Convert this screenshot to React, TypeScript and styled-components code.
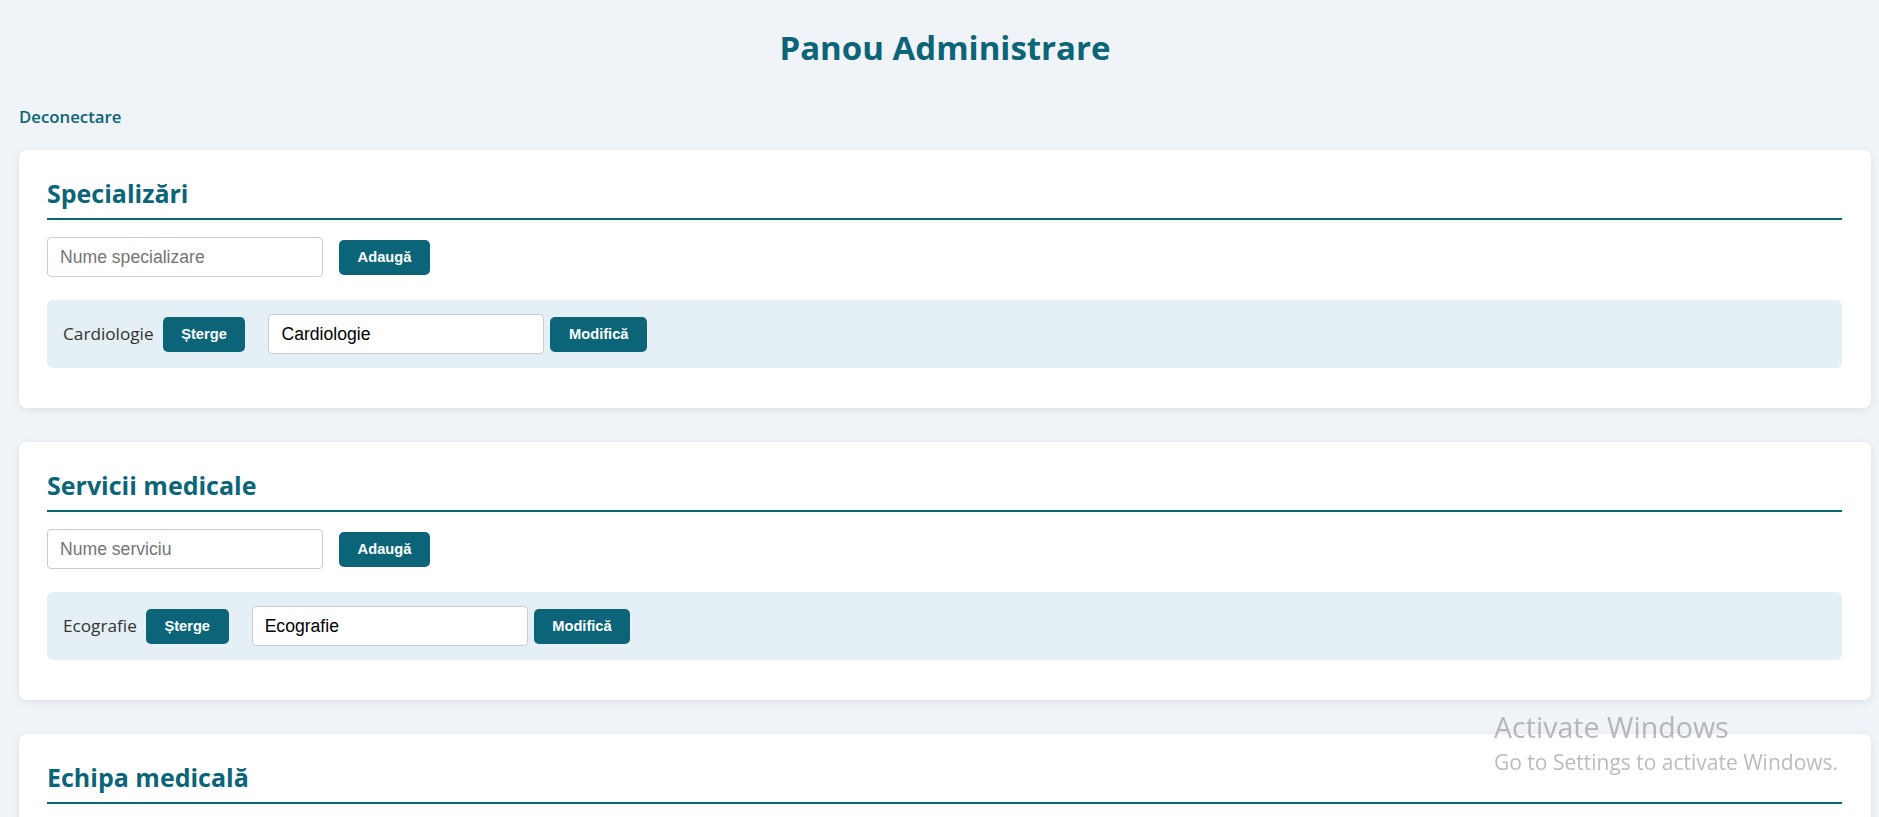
import React, { useState } from "react";
import styled, { createGlobalStyle } from "styled-components";

const TEAL = "#0b6477";

type Item = { id: number; name: string };

const GlobalStyle = createGlobalStyle`
  html, body {
    margin: 0;
    padding: 0;
    background-color: #f0f4f8;
    font-family: "Open Sans", "Noto Sans", "DejaVu Sans", sans-serif;
  }
  * {
    box-sizing: border-box;
  }
`;

const Page = styled.div`
  padding: 0 8px 40px 19px;
`;

const Title = styled.h1`
  margin: 0;
  padding-top: 28px;
  text-align: center;
  font-size: 33px;
  line-height: 40px;
  font-weight: 700;
  color: ${TEAL};
`;

const Nav = styled.div`
  display: flex;
  margin-top: 39px;
`;

const Logout = styled.a`
  font-size: 16.8px;
  line-height: 20px;
  font-weight: 600;
  color: ${TEAL};
  text-decoration: none;
  cursor: pointer;
`;

const Sections = styled.div`
  display: flex;
  flex-direction: column;
  gap: 34px;
  margin-top: 23px;
`;

const Card = styled.section`
  background-color: #ffffff;
  border-radius: 8px;
  padding: 27px 29px 40px 28px;
  box-shadow: 0 2px 8px rgba(0, 0, 0, 0.08);
`;

const SectionTitle = styled.h2`
  margin: 0 0 17px;
  padding-bottom: 9px;
  border-bottom: 2px solid ${TEAL};
  font-size: 25px;
  line-height: 32px;
  font-weight: 700;
  color: ${TEAL};
`;

const AddRow = styled.div`
  display: flex;
  align-items: center;
  gap: 16px;
  margin-bottom: 23px;
`;

const TextInput = styled.input`
  width: 276px;
  height: 40px;
  padding: 0 12px;
  border: 1px solid #cccccc;
  border-radius: 4px;
  background: #ffffff;
  font-family: "Liberation Sans", Arial, sans-serif;
  font-size: 17.6px;
  color: #000000;
  outline: none;
  &::placeholder {
    color: #757575;
  }
`;

const Button = styled.button`
  padding: 9px 18.6px;
  border: none;
  border-radius: 5px;
  background-color: ${TEAL};
  color: #ffffff;
  font-family: "Liberation Sans", Arial, sans-serif;
  font-size: 14.67px;
  line-height: 17px;
  font-weight: 700;
  cursor: pointer;
`;

const ItemRow = styled.div`
  display: flex;
  align-items: center;
  padding: 14px 16px;
  border-radius: 6px;
  background-color: #e5f0f6;
`;

const ItemName = styled.span`
  margin-right: 9px;
  font-size: 17.2px;
  line-height: 20px;
  color: #333333;
`;

const EditForm = styled.div`
  display: flex;
  align-items: center;
  gap: 6px;
  margin-left: 23px;
`;

const Watermark = styled.div`
  position: fixed;
  left: 1494px;
  top: 709px;
  color: rgba(120, 120, 120, 0.5);
  pointer-events: none;
`;

const WatermarkTitle = styled.div`
  font-size: 28.6px;
  line-height: 36px;
`;

const WatermarkText = styled.div`
  margin-top: 3px;
  font-size: 21px;
  line-height: 28px;
`;

type ListSectionProps = {
  title: string;
  placeholder?: string;
  initial?: Item[];
};

const ListSection = ({ title, placeholder, initial = [] }: ListSectionProps) => {
  const [items, setItems] = useState<Item[]>(initial);
  const [draft, setDraft] = useState("");
  const [edits, setEdits] = useState<Record<number, string>>(
    Object.fromEntries(initial.map((i) => [i.id, i.name]))
  );

  const add = () => {
    if (!draft.trim()) return;
    const id = Date.now();
    setItems([...items, { id, name: draft }]);
    setEdits({ ...edits, [id]: draft });
    setDraft("");
  };

  return (
    <Card>
      <SectionTitle>{title}</SectionTitle>
      {placeholder && (
        <AddRow>
          <TextInput
            placeholder={placeholder}
            value={draft}
            onChange={(e) => setDraft(e.target.value)}
          />
          <Button onClick={add}>Adaugă</Button>
        </AddRow>
      )}
      {items.map((item) => (
        <ItemRow key={item.id}>
          <ItemName>{item.name}</ItemName>
          <Button onClick={() => setItems(items.filter((i) => i.id !== item.id))}>
            Șterge
          </Button>
          <EditForm>
            <TextInput
              value={edits[item.id] ?? ""}
              onChange={(e) => setEdits({ ...edits, [item.id]: e.target.value })}
            />
            <Button
              onClick={() =>
                setItems(
                  items.map((i) => (i.id === item.id ? { ...i, name: edits[item.id] } : i))
                )
              }
            >
              Modifică
            </Button>
          </EditForm>
        </ItemRow>
      ))}
    </Card>
  );
};

const App = () => {
  return (
    <>
      <GlobalStyle />
      <Page>
        <Title>Panou Administrare</Title>
        <Nav>
          <Logout>Deconectare</Logout>
        </Nav>
        <Sections>
          <ListSection
            title="Specializări"
            placeholder="Nume specializare"
            initial={[{ id: 1, name: "Cardiologie" }]}
          />
          <ListSection
            title="Servicii medicale"
            placeholder="Nume serviciu"
            initial={[{ id: 2, name: "Ecografie" }]}
          />
          <ListSection title="Echipa medicală" />
        </Sections>
      </Page>
      <Watermark>
        <WatermarkTitle>Activate Windows</WatermarkTitle>
        <WatermarkText>Go to Settings to activate Windows.</WatermarkText>
      </Watermark>
    </>
  );
};

export default App;
